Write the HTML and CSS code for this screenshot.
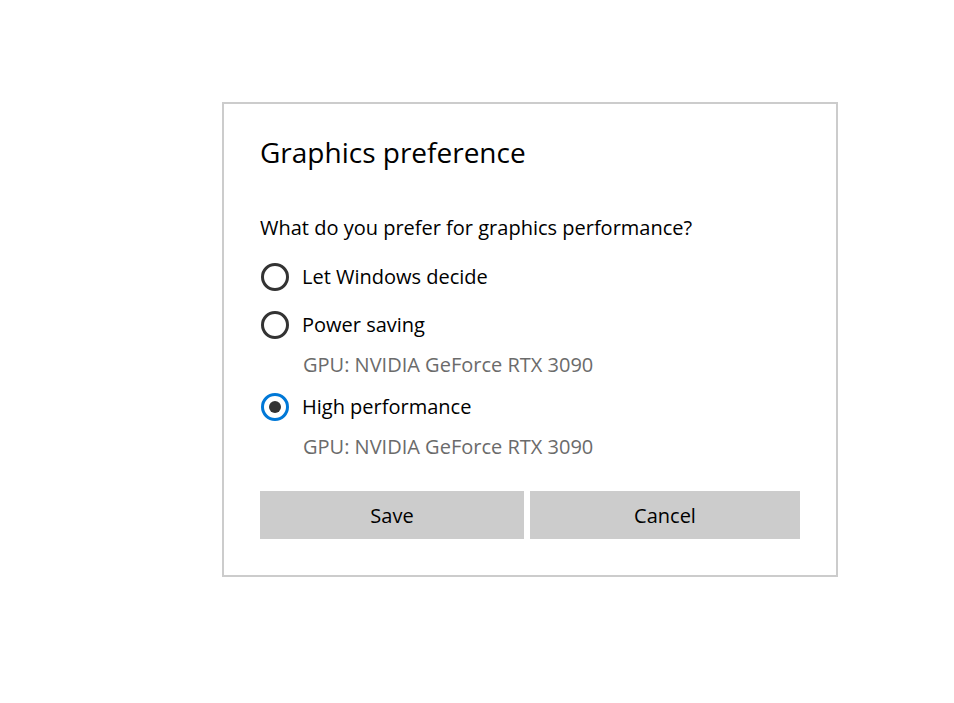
FILE: index.html
```html
<!DOCTYPE html>
<html lang="en">
<head>
<meta charset="utf-8">
<title>Graphics preference</title>
<link rel="stylesheet" href="styles.css">
</head>
<body>
<div class="page">
  <div class="dialog">
    <h1 class="title">Graphics preference</h1>
    <p class="question">What do you prefer for graphics performance?</p>
    <div class="option option-first">
      <span class="radio"></span>
      <span class="label">Let Windows decide</span>
    </div>
    <div class="option option-gap">
      <span class="radio"></span>
      <span class="label">Power saving</span>
    </div>
    <div class="gpu">GPU: NVIDIA GeForce RTX 3090</div>
    <div class="option option-gap2">
      <span class="radio checked"><span class="dot"></span></span>
      <span class="label">High performance</span>
    </div>
    <div class="gpu">GPU: NVIDIA GeForce RTX 3090</div>
    <div class="buttons">
      <button class="btn">Save</button>
      <button class="btn">Cancel</button>
    </div>
  </div>
</div>
</body>
</html>
```
FILE: styles.css
```css
html, body {
  margin: 0;
  padding: 0;
  background: #ffffff;
}
body {
  font-family: "Open Sans", "Noto Sans", sans-serif;
  color: #000;
}
.page {
  padding: 102px 0 0 222px;
}
.dialog {
  width: 612px;
  height: 471px;
  border: 2px solid #cccccc;
  box-sizing: content-box;
  padding: 0;
  display: flex;
  flex-direction: column;
}
.title {
  margin: 30px 0 0 36px;
  font-size: 28px;
  font-weight: 400;
  line-height: 36px;
}
.question {
  margin: 44px 0 0 36px;
  font-size: 20px;
  line-height: 28px;
}
.option {
  display: flex;
  align-items: center;
  gap: 13px;
  margin: 20px 0 0 37px;
  height: 28px;
}
.option-first { margin-top: 21px; }
.option-gap { margin-top: 20px; }
.option-gap2 { margin-top: 14px; }
.radio {
  width: 28px;
  height: 28px;
  box-sizing: border-box;
  border: 3px solid #333333;
  border-radius: 50%;
  display: flex;
  align-items: center;
  justify-content: center;
  flex: none;
}
.radio.checked {
  border-color: #0078d7;
}
.dot {
  width: 12px;
  height: 12px;
  border-radius: 50%;
  background: #333333;
}
.label {
  font-size: 20px;
  line-height: 28px;
}
.gpu {
  margin: 12px 0 0 79px;
  font-size: 20px;
  line-height: 28px;
  color: #6b6b6b;
}
.buttons {
  display: grid;
  grid-template-columns: 264px 270px;
  gap: 6px;
  margin: 30px 0 0 36px;
}
.btn {
  height: 48px;
  border: none;
  background: #cccccc;
  font-family: inherit;
  font-size: 20px;
  color: #000;
  padding: 0;
}
```
